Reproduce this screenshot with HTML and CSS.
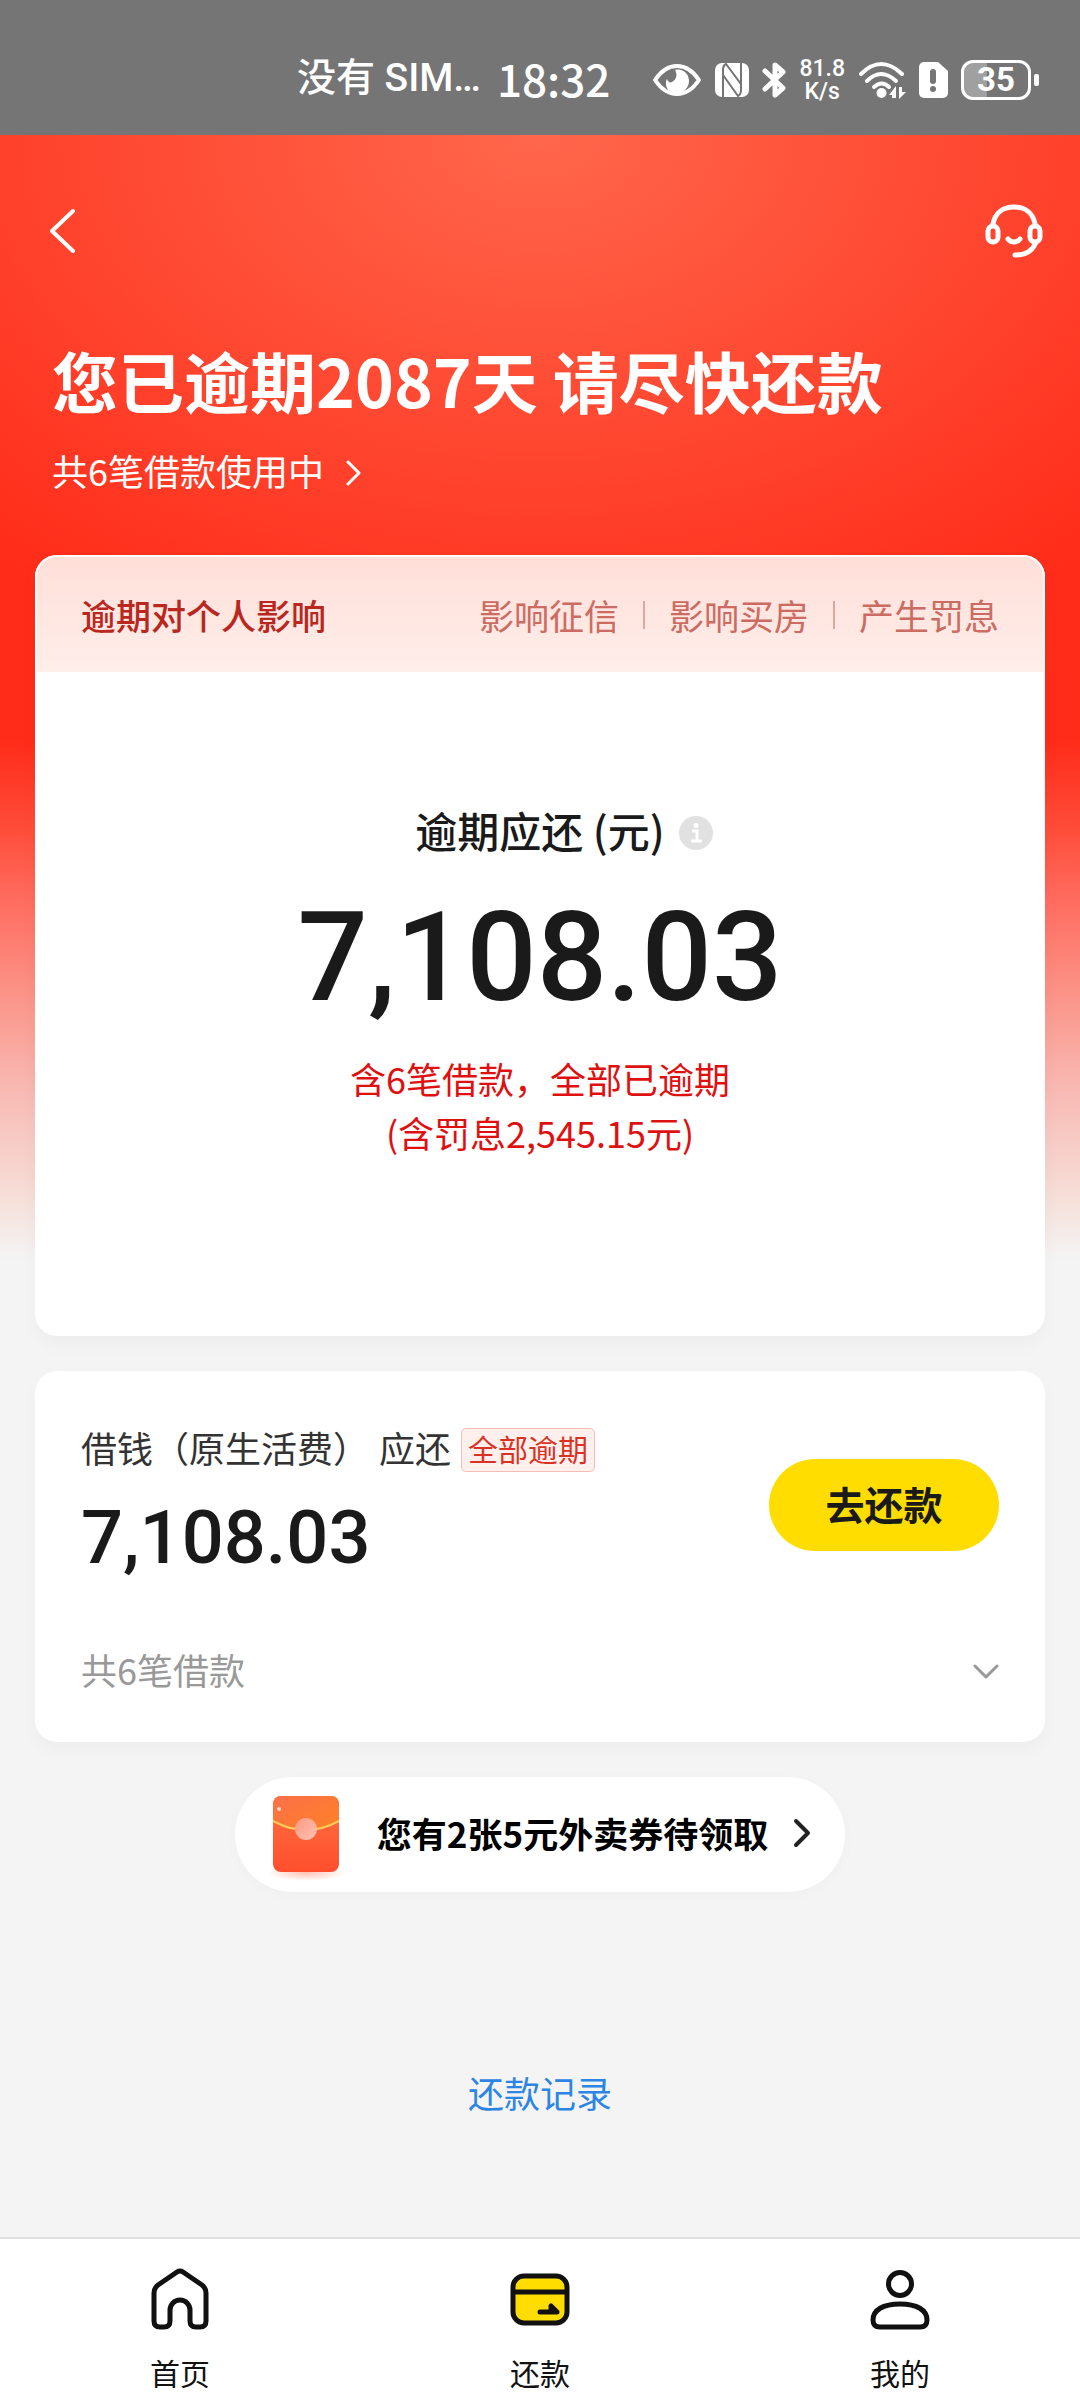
FILE: index.html
```html
<!DOCTYPE html>
<html lang="zh-CN">
<head>
<meta charset="utf-8">
<meta name="viewport" content="width=device-width, initial-scale=1">
<title>还款</title>
<link rel="stylesheet" href="styles.css">
</head>
<body>
<div class="status">
  <span class="carrier">没有 SIM…</span>
  <span class="clock">18:32</span>
  <div class="status-icons">
    <svg width="50" height="36" viewBox="0 0 50 36"><path d="M3 18C9 9 16 4 25 4s16 5 22 14c-6 9-13 14-22 14S9 27 3 18z" fill="none" stroke="#fff" stroke-width="4" stroke-linejoin="round"/><path d="M23 8c8-2 14 4 14 11 0 6-5 12-12 12s-11-4-11-9c0-2 0-4 1-5 1 3 3 4 5 3 4-2 6-7 3-12z" fill="#fff"/></svg>
    <svg width="34" height="36" viewBox="0 0 34 36"><rect y="1" width="34" height="34" rx="7" fill="#fff"/><path d="M8 35V8c0-3 1-5 3-6l15 20V10M26 1v27c0 3-1 5-3 6L8 13" fill="none" stroke="#757575" stroke-width="2"/></svg>
    <svg width="24" height="38" viewBox="0 0 24 38"><path d="M3 10l18 17-8 7V4l8 7L3 28" fill="none" stroke="#fff" stroke-width="5" stroke-linecap="round" stroke-linejoin="round"/></svg>
    <div class="speed"><div>81.8</div><div>K/s</div></div>
    <svg width="48" height="38" viewBox="0 0 48 38"><g fill="none" stroke="#fff" stroke-width="4" stroke-linecap="round"><path d="M3 13Q23-7 44 13"/><path d="M9 20q14-14 29 0"/><path d="M16 26q8-7 15 0"/></g><circle cx="23.500" cy="32" r="5" fill="#fff"/><path d="M31 34l7-9v12h-4v-3zm17-3l-7 7V26h3v5z" fill="#fff"/></svg>
    <svg width="29" height="36" viewBox="0 0 29 36"><path d="M5 0h14l10 9v22a5 5 0 0 1-5 5H5a5 5 0 0 1-5-5V5a5 5 0 0 1 5-5z" fill="#fff"/><path d="M14 10v9" stroke="#757575" stroke-width="6" stroke-linecap="round"/><circle cx="14" cy="27" r="3" fill="#757575"/></svg>
    <div class="battery"><span class="battery-level">35</span><i class="battery-tip"></i></div>
  </div>
</div>

<div class="page">
  <header class="topbar">
    <button class="icon-button" type="button" aria-label="返回"><svg width="28" height="46" viewBox="0 0 28 46"><path d="M25 3L4 23l21 20" fill="none" stroke="#fff" stroke-width="4" stroke-linecap="round" stroke-linejoin="round"/></svg></button>
    <button class="icon-button" type="button" aria-label="客服"><svg width="58" height="54" viewBox="0 0 58 54"><g fill="none" stroke="#fff" stroke-width="5" stroke-linecap="round"><path d="M8 20C10 9 18 3 29 3s19 6 21 17"/><rect x="3" y="22" width="10" height="16" rx="5"/><rect x="45" y="22" width="10" height="16" rx="5"/><path d="M23 35c3 4 9 4 12 0M51 38c-3 9-11 13-21 13"/></g></svg></button>
  </header>

  <section class="intro">
    <h1 class="title">您已逾期2087天 请尽快还款</h1>
    <a class="loans-link" href="#loans">共6笔借款使用中<svg class="chevron" width="16" height="26" viewBox="0 0 16 26"><path d="M2 2l11 11L2 24" fill="none" stroke="#fff" stroke-width="3" stroke-linecap="round" stroke-linejoin="round"/></svg></a>
  </section>

  <main class="cards">
    <section class="card">
      <div class="impact">
        <h2 class="impact-title">逾期对个人影响</h2>
        <ul class="impact-list"><li>影响征信</li><li>影响买房</li><li>产生罚息</li></ul>
      </div>
      <div class="summary">
        <div class="summary-label">
          <span class="summary-name">逾期应还 (元)</span>
          <button class="info" type="button" aria-label="说明"><svg class="chevron" width="34" height="34" viewBox="0 0 34 34"><circle cx="17" cy="17" r="17" fill="#e1e1e1"/><path d="M13 15h5v9m-6 1h11" fill="none" stroke="#fff" stroke-width="3"/><circle cx="17" cy="9.500" r="2.500" fill="#fff"/></svg></button>
        </div>
        <div class="amount">7,108.03</div>
        <p class="summary-note">含6笔借款，全部已逾期<br>(含罚息2,545.15元)</p>
      </div>
    </section>

    <section class="card loan" id="loans">
      <div class="loan-main">
        <div>
          <div class="loan-name"><span>借钱（原生活费）</span><span>应还</span><span class="tag">全部逾期</span></div>
          <div class="loan-amount">7,108.03</div>
        </div>
        <button class="pay" type="button">去还款</button>
      </div>
      <button class="expand" type="button"><span>共6笔借款</span><svg class="chevron" width="26" height="16" viewBox="0 0 26 16"><path d="M2 2l11 11L24 2" fill="none" stroke="#999" stroke-width="3" stroke-linecap="round" stroke-linejoin="round"/></svg></button>
    </section>
  </main>

  <a class="coupon" href="#coupon">
    <svg class="envelope" width="78" height="86" viewBox="0 0 78 86">
      <defs>
        <linearGradient id="env" x1="0" y1="0" x2="0" y2="1"><stop offset="0" stop-color="#ff7143"/><stop offset="1" stop-color="#ff4f2c"/></linearGradient>
        <linearGradient id="flap" x1="0" y1="0" x2="1" y2="1"><stop offset="0" stop-color="#fb7048"/><stop offset="1" stop-color="#ff8126"/></linearGradient>
        <linearGradient id="seal" x1="0" y1="0" x2="1" y2="1"><stop offset="0" stop-color="#ff9781"/><stop offset="1" stop-color="#ffc3b3"/></linearGradient>
        <radialGradient id="shade"><stop offset="0" stop-color="#ff9c85" stop-opacity=".6"/><stop offset="1" stop-color="#ff9c85" stop-opacity="0"/></radialGradient>
      </defs>
      <ellipse cx="39" cy="77" rx="39" ry="8" fill="url(#shade)"/>
      <rect x="6" width="66" height="76" rx="8" fill="url(#env)"/>
      <path d="M14 0h50a8 8 0 0 1 8 8v17Q39 43 6 25V8a8 8 0 0 1 8-8z" fill="url(#flap)"/>
      <path d="M6 25Q39 43 72 25" fill="none" stroke="#ffcb55" stroke-width="2"/>
      <circle cx="39" cy="33" r="11" fill="url(#seal)"/><circle cx="12" cy="13" r="2" fill="#ffd6c9"/>
    </svg>
    <span>您有2张5元外卖券待领取</span>
    <svg class="coupon-arrow" width="20" height="30" viewBox="0 0 20 30"><path d="M3 3l12 12L3 27" fill="none" stroke="#222" stroke-width="4" stroke-linecap="round" stroke-linejoin="round"/></svg>
  </a>

  <a class="history" href="#history">还款记录</a>
</div>

<nav class="tabs">
  <a class="tab" href="#home"><svg width="60" height="64" viewBox="0 0 60 64"><path d="M27 4Q30 2 33 4L52 17Q56 20 56 25v28q0 6-6 6h-4q-6 0-6-6V42a10 10 0 0 0-20 0v11q0 6-6 6h-4q-6 0-6-6V25q0-5 4-8z" fill="#fff" stroke="#111" stroke-width="5" stroke-linejoin="round"/></svg>首页</a>
  <a class="tab" href="#repay" aria-current="page"><svg width="60" height="64" viewBox="0 0 60 64"><rect x="3" y="8" width="54" height="47" rx="11" fill="#fd0" stroke="#111" stroke-width="5"/><path d="M3 24h54" stroke="#111" stroke-width="5"/><path d="M30 44h17l-6-6v5" fill="none" stroke="#111" stroke-width="5" stroke-linecap="round" stroke-linejoin="round"/></svg>还款</a>
  <a class="tab" href="#me"><svg width="60" height="64" viewBox="0 0 60 64"><circle cx="30" cy="16" r="11.500" fill="#fff" stroke="#111" stroke-width="5"/><path d="M3 52C3 42 13 36 30 36s27 6 27 16q0 7-7 7H10q-7 0-7-7z" fill="#fff" stroke="#111" stroke-width="5"/></svg>我的</a>
</nav>
</body>
</html>
```
FILE: styles.css
```css
* {
  box-sizing: border-box;
}

body {
  margin: 0;
  min-height: 100vh;
  display: flex;
  flex-direction: column;
  background: #f4f4f4;
  color: #1a1a1a;
  font-family: "Noto Sans CJK SC", sans-serif;
  font-size: 36px;
  line-height: 54px;
}

h1,
h2,
p,
ul {
  margin: 0;
  padding: 0;
}

a {
  color: inherit;
  text-decoration: none;
}

button {
  padding: 0;
  border: 0;
  background: none;
  color: inherit;
  font: inherit;
  cursor: pointer;
}

svg {
  display: block;
  flex: none;
}

/* Chinese glyphs sit low in their line, so symbols beside them do too */
.chevron {
  margin-top: 6px;
}

/* Status bar */
.status {
  display: flex;
  align-items: center;
  justify-content: flex-end;
  height: 135px;
  padding: 24px 41px 0 0;
  background: #757575;
  color: #fff;
  white-space: nowrap;
}

.carrier,
.clock {
  padding-bottom: 4px;
}

.carrier {
  margin-right: 16px;
  font-family: Roboto, "Noto Sans CJK SC", sans-serif;
  font-size: 39px;
  font-weight: 500;
}

.clock {
  margin-right: 42px;
  font-size: 44px;
  font-weight: 500;
}

.status-icons {
  display: flex;
  align-items: center;
  gap: 13px;
}

.speed {
  font-family: Roboto, sans-serif;
  font-size: 23px;
  font-weight: 500;
  line-height: 23px;
  text-align: center;
}

.battery {
  display: flex;
  align-items: center;
  gap: 3px;
}

.battery-level {
  width: 70px;
  border: 3px solid #fff;
  border-radius: 12px;
  background: linear-gradient(90deg, #a0a0a0 35%, #757575 36%);
  font-family: Roboto, sans-serif;
  font-size: 33px;
  font-weight: 700;
  line-height: 34px;
  text-align: center;
}

.battery-tip {
  width: 5px;
  height: 12px;
  border-radius: 2px;
  background: #fff;
}

/* Page */
.page {
  flex: 1;
  display: flex;
  flex-direction: column;
  background:
    radial-gradient(ellipse 820px 560px at 50% 0, #ff674c, rgba(255, 44, 25, 0)) no-repeat,
    linear-gradient(#ff2c19 605px, #ff4c39 692px, #ff6c5f 765px, #fb9488 861px, #f8bbb5 959px, #f6dcd5 1055px, #f4f4f4 1124px);
}

.topbar {
  display: flex;
  align-items: center;
  justify-content: space-between;
  height: 192px;
  padding: 0 37px 0 48px;
}

.intro {
  padding: 4px 52px 58px;
}

.title {
  color: #fff;
  font-size: 66px;
  font-weight: 700;
  line-height: 96px;
}

.loans-link {
  display: flex;
  align-items: center;
  gap: 22px;
  margin-top: 16px;
  color: #fff;
}

.cards {
  display: grid;
  gap: 35px;
  padding: 0 35px;
}

.card {
  border-radius: 22px;
  background: #fff;
  box-shadow: 0 8px 20px rgba(0, 0, 0, 0.03);
}

.impact {
  display: flex;
  align-items: center;
  justify-content: space-between;
  height: 119px;
  padding: 0 44px;
  border: 2px solid #fff;
  border-radius: 22px 22px 0 0;
  background: linear-gradient(#ffdfd8, #ffeeea);
  font-size: 35px;
}

.impact-title {
  color: #b8281f;
  font-size: 35px;
  font-weight: 500;
}

.impact-list {
  display: flex;
  align-items: center;
  color: #cc6b61;
  list-style: none;
}

.impact-list li {
  display: flex;
  align-items: center;
}

.impact-list li + li::before {
  content: "";
  width: 2px;
  height: 28px;
  margin: 0 24px;
  background: #e3a69f;
}

.summary {
  padding: 126px 46px 177px;
  text-align: center;
}

.summary-label {
  display: grid;
  grid-template-columns: 1fr auto 1fr;
  align-items: center;
  gap: 14px;
  font-size: 42px;
  line-height: 60px;
}

.summary-name {
  grid-column: 2;
  font-weight: 500;
}

.info {
  justify-self: start;
}

.amount {
  margin: 32px 0 27px;
  font-family: Roboto, sans-serif;
  font-size: 124px;
  font-weight: 500;
  line-height: 132px;
}

.summary-note {
  color: #df1010;
}

.loan {
  padding: 49px 46px 46px;
}

.loan-main {
  display: flex;
  align-items: center;
  justify-content: space-between;
}

.loan-name {
  display: flex;
  align-items: center;
  gap: 10px;
  color: #333;
}

.tag {
  margin-top: 6px;
  padding: 0 6px 4px;
  border: 1px solid #f3bdb8;
  border-radius: 5px;
  background: #fff0ee;
  color: #d93224;
  font-size: 30px;
  line-height: 38px;
}

.loan-amount {
  margin-top: 12px;
  font-family: Roboto, sans-serif;
  font-size: 74px;
  font-weight: 500;
  line-height: 104px;
}

.pay {
  width: 230px;
  padding-bottom: 4px;
  border-radius: 46px;
  background: #fd0;
  font-size: 39px;
  font-weight: 700;
  line-height: 88px;
}

.expand {
  display: flex;
  align-items: center;
  justify-content: space-between;
  width: 100%;
  margin-top: 52px;
  color: #999;
}

.coupon {
  display: flex;
  align-items: center;
  align-self: center;
  height: 115px;
  margin-top: 35px;
  padding: 0 32px 4px;
  border-radius: 58px;
  background: #fff;
  box-shadow: 0 4px 16px rgba(0, 0, 0, 0.02);
  color: #000;
  font-size: 35px;
  font-weight: 700;
}

.envelope {
  margin: 12px 32px 0 0;
}

.coupon-arrow {
  margin-left: 25px;
}

.history {
  align-self: center;
  margin: 173px 0 114px;
  color: #2d85e3;
}

/* Bottom tabs */
.tabs {
  display: grid;
  grid-template-columns: repeat(3, 1fr);
  height: 163px;
  padding-top: 29px;
  border-top: 2px solid #dedede;
  background: #fff;
  color: #111;
}

.tab {
  display: flex;
  flex-direction: column;
  align-items: center;
  gap: 18px;
  font-size: 30px;
  line-height: 44px;
}
```
